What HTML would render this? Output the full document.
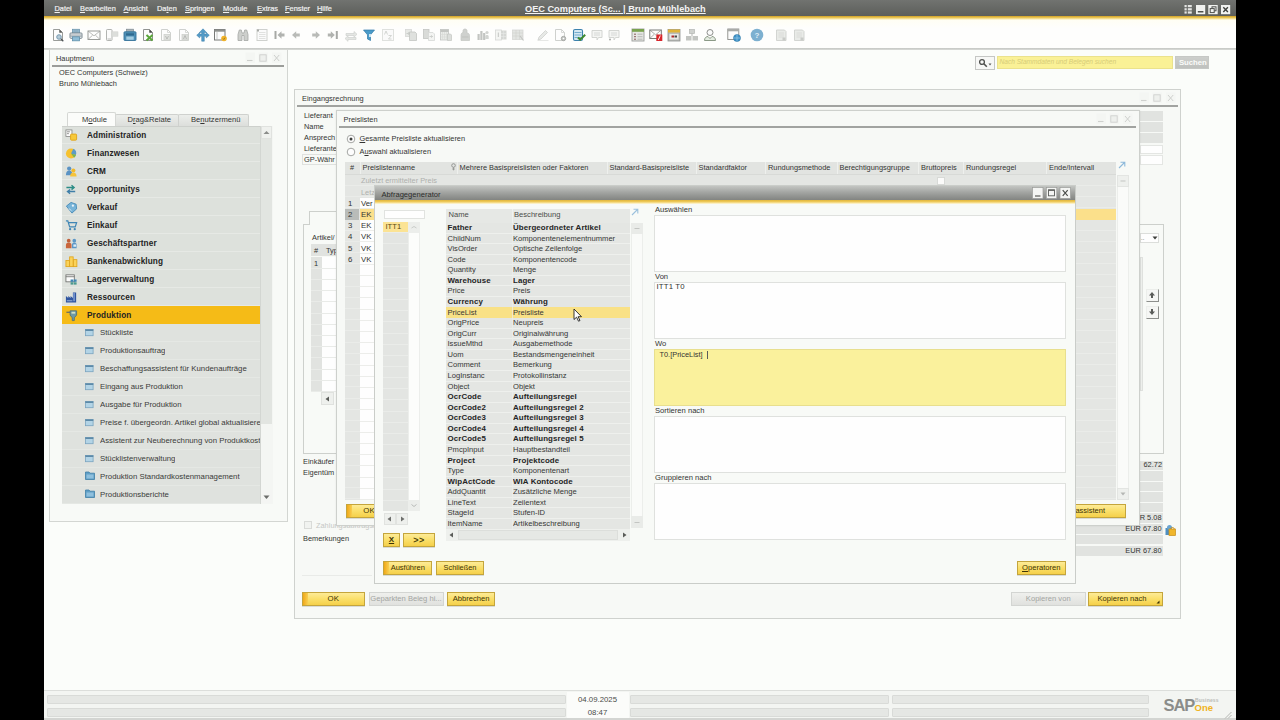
<!DOCTYPE html><html><head><meta charset="utf-8"><title>SAP Business One</title><style>html,body{margin:0;padding:0;background:#000;}
body{width:1280px;height:720px;position:relative;overflow:hidden;font-family:"Liberation Sans",sans-serif;font-size:7.4px;color:#333432;}
div,span{position:absolute;box-sizing:border-box;}
.t{white-space:nowrap;line-height:12px;height:12px;}
.b{font-weight:bold;color:#232323;font-size:8.2px;letter-spacing:0.12px;margin-top:1px;}
.mi{font-size:7.8px;color:#3a3b39;}
.w{color:#f1f1f1;}
.g{color:#a9aba8;}
.btn{border:1px solid #c4a53c;background:linear-gradient(#fdeb97,#fadf6a 50%,#f5d04a);text-align:center;line-height:12px;color:#3c3306;white-space:nowrap;overflow:hidden;box-shadow:0 1px 0 #d9dbd6;}
.btnd{border:1px solid #d3d5d2;background:linear-gradient(#eff0ed,#e0e1de);text-align:center;line-height:12px;color:#a3a5a2;white-space:nowrap;overflow:hidden;}
.win{background:#f7f9f6;border:1px solid #cdd0cc;}
.fld{background:#e2e4e1;}
.wh{background:#fefefd;border:1px solid #dcdfdb;}
.q{font-size:7.600px;color:#363735;}
.qb{font-size:7.900px;font-weight:bold;color:#252525;letter-spacing:0.100px;}
</style></head><body>
<div style="left:44px;top:0px;width:1192px;height:720px;background:#fbfdfa;"></div>
<div style="left:44px;top:0px;width:1192px;height:17px;background:linear-gradient(#717370,#5b5d59);"></div>
<div style="left:44px;top:16px;width:1192px;height:4px;background:linear-gradient(#cf9f25,#e6c04c 35%,#f6e39c 70%,#fffdf0);"></div>
<div style="left:44px;top:20px;width:1192px;height:28px;background:linear-gradient(#fffef4,#fefefd 30%);"></div>
<div style="left:44px;top:48px;width:1192px;height:2px;background:linear-gradient(#c4c6c3,#d9dbd8);"></div>
<span class="t w" style="left:54.5px;top:2.5px;font-size:7.400px;-webkit-text-stroke:0.200px #f1f1f1;"><u>D</u>atei</span>
<span class="t w" style="left:80px;top:2.5px;font-size:7.400px;-webkit-text-stroke:0.200px #f1f1f1;"><u>B</u>earbeiten</span>
<span class="t w" style="left:123.5px;top:2.5px;font-size:7.400px;-webkit-text-stroke:0.200px #f1f1f1;"><u>A</u>nsicht</span>
<span class="t w" style="left:157px;top:2.5px;font-size:7.400px;-webkit-text-stroke:0.200px #f1f1f1;">Da<u>t</u>en</span>
<span class="t w" style="left:185px;top:2.5px;font-size:7.400px;-webkit-text-stroke:0.200px #f1f1f1;"><u>S</u>pringen</span>
<span class="t w" style="left:223px;top:2.5px;font-size:7.400px;-webkit-text-stroke:0.200px #f1f1f1;"><u>M</u>odule</span>
<span class="t w" style="left:257px;top:2.5px;font-size:7.400px;-webkit-text-stroke:0.200px #f1f1f1;"><u>E</u>xtras</span>
<span class="t w" style="left:285px;top:2.5px;font-size:7.400px;-webkit-text-stroke:0.200px #f1f1f1;"><u>F</u>enster</span>
<span class="t w" style="left:317px;top:2.5px;font-size:7.400px;-webkit-text-stroke:0.200px #f1f1f1;"><u>H</u>ilfe</span>
<span class="t" style="left:525px;top:2.5px;font-size:9.2px;font-weight:bold;color:#f3f3f3;"><u>OEC Computers (Sc... | Bruno Mühlebach</u></span>
<svg style="position:absolute;left:1184px;top:4px;" width="47" height="11" viewBox="0 0 47 11"><g fill="#e4e5e3"><rect x="0.500" y="1" width="2.200" height="2.200"/><rect x="0.500" y="4.200" width="2.200" height="2.200"/><rect x="0.500" y="7.400" width="2.200" height="2.200"/><rect x="3.800" y="1" width="4" height="2.200"/><rect x="3.800" y="4.200" width="4" height="2.200"/><rect x="3.800" y="7.400" width="4" height="2.200"/></g>
<rect x="12" y="1" width="9.200" height="9.200" fill="#f1f2f0"/><rect x="13.800" y="7" width="5.600" height="1.500" fill="#4d4f4c"/>
<rect x="24.300" y="1" width="9.400" height="9.200" fill="#f1f2f0"/><rect x="28" y="2.800" width="4" height="4" fill="none" stroke="#4d4f4c" stroke-width="1"/><rect x="26.200" y="4.600" width="4" height="4" fill="#f1f2f0" stroke="#4d4f4c" stroke-width="1"/>
<rect x="37" y="1" width="9.200" height="9.200" fill="#f1f2f0"/><path d="M39.300 3.200l4.600 4.800M43.900 3.200l-4.600 4.800" stroke="#3f413e" stroke-width="1.400"/></svg>
<svg style="position:absolute;left:51.0px;top:28.0px;" width="14" height="14" viewBox="0 0 14 14"><path d="M2.5 1.5h6l3 3v8h-9z" fill="#fdfdfd" stroke="#9b9d9a" stroke-width="1"/><path d="M8.5 1.5v3h3" fill="none" stroke="#9b9d9a" stroke-width="0.8"/><path d="M8.500 1.500l3 3h-3z" fill="#5f615e"/><circle cx="8" cy="9" r="2.300" fill="#b4cbd8" stroke="#6f93ab" stroke-width="0.900"/><path d="M9.800 10.800l2.500 2.400" stroke="#4f5457" stroke-width="1.300"/></svg>
<svg style="position:absolute;left:69.0px;top:28.0px;" width="14" height="14" viewBox="0 0 14 14"><rect x="3.500" y="1.300" width="7" height="4" fill="#a5c4d5" stroke="#6b94ad" stroke-width="0.800"/><path d="M4.300 2.800h5.400M4.300 4h5.400" stroke="#6b94ad" stroke-width="0.600"/><rect x="1" y="5" width="12" height="5.300" rx="0.800" fill="#f1f3f4" stroke="#6c7c85" stroke-width="0.900"/><path d="M1.500 7h11M1.500 8.300h11" stroke="#7d8b93" stroke-width="0.700"/><rect x="3.500" y="8.800" width="7" height="4" fill="#8fbdd6" stroke="#5f8fab" stroke-width="0.800"/></svg>
<svg style="position:absolute;left:87.0px;top:28.0px;" width="14" height="14" viewBox="0 0 14 14"><rect x="1" y="3" width="12" height="8.500" fill="#fdfdfd" stroke="#8f918e" stroke-width="0.900"/><path d="M1 3l6 4.800 6-4.800M1 11.500l4.600-4.300M13 11.500l-4.600-4.300" fill="none" stroke="#9fa19e" stroke-width="0.700"/></svg>
<svg style="position:absolute;left:105.0px;top:28.0px;" width="14" height="14" viewBox="0 0 14 14"><rect x="1.500" y="1.500" width="5.500" height="11" rx="0.800" fill="#fbfbfb" stroke="#a9aba8" stroke-width="0.900"/><rect x="7" y="3.800" width="6" height="4.500" fill="#dcdedb" stroke="#d0d2cf" stroke-width="0.500"/><path d="M2.500 11h3.500" stroke="#a9aba8" stroke-width="0.800"/></svg>
<svg style="position:absolute;left:123.0px;top:28.0px;" width="14" height="14" viewBox="0 0 14 14"><rect x="3.500" y="1.200" width="7" height="3" fill="#aab3b8" stroke="#7f8a90" stroke-width="0.700"/><rect x="1" y="3.800" width="12" height="8.700" rx="0.800" fill="#4d8fb5" stroke="#35749b" stroke-width="0.900"/><rect x="3" y="5.300" width="8" height="2.200" fill="#2f6a8f"/><rect x="3.300" y="8.500" width="7.400" height="3.300" fill="#a3cde2"/></svg>
<svg style="position:absolute;left:141.0px;top:28.0px;" width="14" height="14" viewBox="0 0 14 14"><path d="M2.5 1.5h6l3 3v8h-9z" fill="#fdfdfd" stroke="#919390" stroke-width="1"/><path d="M8.5 1.5v3h3" fill="none" stroke="#919390" stroke-width="0.8"/><path d="M8.5 1.5h0l3 3h-3z" fill="#4a4c49"/><path d="M5.5 7l6 5.5M11.5 7l-6 5.5" stroke="#5aa63a" stroke-width="2"/></svg>
<svg style="position:absolute;left:159.0px;top:28.0px;" width="14" height="14" viewBox="0 0 14 14"><path d="M2.5 1.5h6l3 3v8h-9z" fill="#fdfdfd" stroke="#cfd1ce" stroke-width="1"/><path d="M8.5 1.5v3h3" fill="none" stroke="#cfd1ce" stroke-width="0.8"/><rect x="5" y="6.5" width="6" height="5.5" fill="#e1e3e0" stroke="#cfd1ce" stroke-width="0.8"/><path d="M6.5 8l1.5 3 1.5-3" stroke="#a9aba8" stroke-width="0.7" fill="none"/></svg>
<svg style="position:absolute;left:177.0px;top:28.0px;" width="14" height="14" viewBox="0 0 14 14"><path d="M2.5 1.5h6l3 3v8h-9z" fill="#fdfdfd" stroke="#cfd1ce" stroke-width="1"/><path d="M8.5 1.5v3h3" fill="none" stroke="#cfd1ce" stroke-width="0.8"/><rect x="5" y="6.5" width="6" height="5.5" fill="#dcdedb" stroke="#cfd1ce" stroke-width="0.8"/><path d="M6.5 11l1.5-3.5 1.5 3.5" stroke="#a9aba8" stroke-width="0.7" fill="none"/></svg>
<svg style="position:absolute;left:195.5px;top:28.0px;" width="14" height="14" viewBox="0 0 14 14"><path d="M7 0.800l3.600 3.700h-2.300v1.600h2v-1.600l3 2.700-3 2.700v-1.600h-2v4.900h-2.600v-4.900h-2v1.600l-3-2.700 3-2.700v1.600h2v-1.600h-2.300z" fill="#549bc7" stroke="#3a7eab" stroke-width="0.500"/></svg>
<svg style="position:absolute;left:213.0px;top:28.0px;" width="14" height="14" viewBox="0 0 14 14"><rect x="1.5" y="1.5" width="10.5" height="10.5" fill="#fcfcfc" stroke="#777976" stroke-width="1"/><rect x="1.5" y="1.5" width="10.5" height="2.2" fill="#8e908d"/><path d="M4 3.7v8.3" stroke="#b9bbb8" stroke-width="0.8"/><circle cx="11" cy="10.5" r="2.8" fill="#f1b32a"/><path d="M10 10.5l0.8 1 1.3-2" stroke="#8d6a14" stroke-width="0.7" fill="none"/></svg>
<svg style="position:absolute;left:236.0px;top:28.0px;" width="14" height="14" viewBox="0 0 14 14"><path d="M2 12.5v-6l1.3-4.5h2l0.7 3h2l0.7-3h2l1.3 4.5v6h-4v-5h-2v5z" fill="#cdcfcc" stroke="#a5a7a4" stroke-width="0.8"/></svg>
<svg style="position:absolute;left:254.5px;top:28.0px;" width="14" height="14" viewBox="0 0 14 14"><rect x="2" y="1.5" width="10" height="11" fill="#fbfbfb" stroke="#cfd1ce" stroke-width="1"/><path d="M4 4.5h6.5M4 6.5h6.5M4 8.5h6.5M4 10.5h6.5" stroke="#dadcd9" stroke-width="0.8"/><rect x="2" y="1.5" width="2" height="2" fill="#a9aba8"/></svg>
<svg style="position:absolute;left:272.0px;top:28.0px;" width="14" height="14" viewBox="0 0 14 14"><rect x="2.5" y="3" width="2" height="8" fill="#a7a9a6"/><path d="M5.5 7l4-3.8v2.3h3v3h-3v2.3z" fill="#b1b3b0"/></svg>
<svg style="position:absolute;left:289.0px;top:28.0px;" width="14" height="14" viewBox="0 0 14 14"><path d="M3 7l4.2-3.8v2.3h3.6v3h-3.6v2.3z" fill="#b9bbb8"/></svg>
<svg style="position:absolute;left:308.5px;top:28.0px;" width="14" height="14" viewBox="0 0 14 14"><path d="M11 7l-4.2-3.8v2.3h-3.6v3h3.6v2.3z" fill="#b9bbb8"/></svg>
<svg style="position:absolute;left:325.5px;top:28.0px;" width="14" height="14" viewBox="0 0 14 14"><rect x="9.8" y="3" width="2" height="8" fill="#a7a9a6"/><path d="M8.8 7l-4-3.8v2.3h-3v3h3v2.3z" fill="#b1b3b0"/></svg>
<svg style="position:absolute;left:344.0px;top:28.0px;" width="14" height="14" viewBox="0 0 14 14"><path d="M2 5.5h8v-2l3 2.8-3 2.8v-1.6h-8zM12 9.5h-8v-1.6l-3 2.6 3 2.8v-1.8h8z" fill="#e4e6e3" stroke="#cfd1ce" stroke-width="0.7"/></svg>
<svg style="position:absolute;left:362.0px;top:28.0px;" width="14" height="14" viewBox="0 0 14 14"><path d="M1.5 2h11l-4 4.8v5.7l-3-1.5v-4.2z" fill="#4a9bc9" stroke="#3179a6" stroke-width="0.7"/><rect x="7" y="6" width="2" height="3" fill="#cfe6f3"/></svg>
<svg style="position:absolute;left:380.5px;top:28.0px;" width="14" height="14" viewBox="0 0 14 14"><rect x="1.5" y="1.5" width="11" height="11" fill="#fafafa" stroke="#dfe1de" stroke-width="1"/><path d="M3.5 6.5l1.5-3.5 1.5 3.5M7.5 7.5h3l-3 3.5h3" fill="none" stroke="#cfd1ce" stroke-width="0.9"/></svg>
<svg style="position:absolute;left:403.5px;top:28.0px;" width="14" height="14" viewBox="0 0 14 14"><rect x="1.500" y="1.500" width="6" height="7" fill="#e7e9e6" stroke="#d6d8d5" stroke-width="0.800"/><path d="M5.500 4h5.500l1.500 1.500v7h-7z" fill="#dfe1de" stroke="#c3c5c2" stroke-width="0.800"/><path d="M2.500 5.500h3l-1.200-1.200M5.500 5.500l-1.200 1.200" stroke="#c3c5c2" stroke-width="0.800" fill="none"/></svg>
<svg style="position:absolute;left:421.8px;top:28.0px;" width="14" height="14" viewBox="0 0 14 14"><rect x="1.500" y="1.500" width="5.500" height="9" fill="#d9dbd8" stroke="#c3c5c2" stroke-width="0.800"/><path d="M6.500 4.500h4.500l1.500 1.500v6.500h-6z" fill="#f3f4f2" stroke="#d6d8d5" stroke-width="0.800"/><path d="M7.500 8.500h3l-1.200-1.200M10.500 8.500l-1.200 1.200" stroke="#c3c5c2" stroke-width="0.800" fill="none"/></svg>
<svg style="position:absolute;left:439.0px;top:28.0px;" width="14" height="14" viewBox="0 0 14 14"><rect x="1.500" y="1.500" width="8" height="10.500" fill="#e9ebe8" stroke="#c3c5c2" stroke-width="0.800"/><rect x="1.500" y="1.500" width="8" height="2.500" fill="#c3c5c2"/><path d="M3.500 4v8M5.500 4v8M7.500 4v8M1.500 6.500h8M1.500 9h8" stroke="#d6d8d5" stroke-width="0.600"/><path d="M8.500 6h3l1 1v5.500h-4z" fill="#dcdedb" stroke="#c3c5c2" stroke-width="0.700"/></svg>
<svg style="position:absolute;left:458.0px;top:28.0px;" width="14" height="14" viewBox="0 0 14 14"><path d="M3 12.500v-5c0-2 1-3 2-3v-2c0-1 1-1.500 2-1.500s2 0.500 2 1.500v2.500c1.500 0 2.500 1 2.500 2.500v5z" fill="#cfd1ce" stroke="#c3c5c2" stroke-width="0.700"/><path d="M4 9h6.500" stroke="#b9bbb8" stroke-width="0.700"/></svg>
<svg style="position:absolute;left:475.5px;top:28.0px;" width="14" height="14" viewBox="0 0 14 14"><rect x="1.500" y="6" width="2.200" height="6" fill="#c3c5c2"/><rect x="4.300" y="3" width="2.200" height="9" fill="#c3c5c2"/><rect x="7.100" y="5" width="2.200" height="7" fill="#c3c5c2"/><circle cx="11" cy="4.500" r="1.600" fill="#d2d4d1"/><path d="M9.300 11v-2.500c0-1 0.700-1.500 1.700-1.500s1.700 0.500 1.700 1.500v2.500z" fill="#d2d4d1"/></svg>
<svg style="position:absolute;left:493.5px;top:28.0px;" width="14" height="14" viewBox="0 0 14 14"><rect x="1.500" y="2" width="6" height="10" fill="#f4f5f3" stroke="#d6d8d5" stroke-width="0.800"/><path d="M4.300 4.500v4.500" stroke="#c3c5c2" stroke-width="1"/><rect x="7" y="2.500" width="5.500" height="9" fill="#d5d7d4"/><path d="M7 5.500h5.500M7 8.500h5.500M9.700 2.500v9" stroke="#e9ebe8" stroke-width="0.600"/></svg>
<svg style="position:absolute;left:511.0px;top:28.0px;" width="14" height="14" viewBox="0 0 14 14"><rect x="1.500" y="2" width="10.500" height="9.500" fill="#e3e5e2" stroke="#d6d8d5" stroke-width="0.800"/><path d="M1.500 5h10.500M1.500 8h10.500M5 2v9.500M8.500 2v9.500" stroke="#d0d2cf" stroke-width="0.600"/><path d="M9 8l3.500 4.500" stroke="#c3c5c2" stroke-width="1.200"/></svg>
<svg style="position:absolute;left:535.5px;top:28.0px;" width="14" height="14" viewBox="0 0 14 14"><path d="M2 12l1-3 6.5-6.5 2 2-6.5 6.5z" fill="#e7e9e6" stroke="#cfd1ce" stroke-width="0.8"/><path d="M1.5 12.5h11" stroke="#dfe1de" stroke-width="0.8"/></svg>
<svg style="position:absolute;left:553.0px;top:28.0px;" width="14" height="14" viewBox="0 0 14 14"><path d="M2.5 1.5h6l3 3v8h-9z" fill="#fdfdfd" stroke="#cfd1ce" stroke-width="1"/><path d="M8.5 1.5v3h3" fill="none" stroke="#cfd1ce" stroke-width="0.8"/><circle cx="10.5" cy="10.5" r="2.2" fill="#c4c6c3" stroke="#a3a5a2" stroke-width="0.9"/><circle cx="10.5" cy="10.5" r="0.8" fill="#fff"/></svg>
<svg style="position:absolute;left:571.8px;top:28.0px;" width="14" height="14" viewBox="0 0 14 14"><rect x="1.5" y="1.5" width="9" height="11" rx="1.5" fill="#d4e7f2" stroke="#3d82ad" stroke-width="1.1"/><path d="M2.5 4.5h7M2.5 7h7M2.5 9.5h7" stroke="#6aa5c9" stroke-width="0.9"/><path d="M6 9.5l2.2 2.2 5-5" stroke="#3f8a2e" stroke-width="2" fill="none"/></svg>
<svg style="position:absolute;left:590.0px;top:28.0px;" width="14" height="14" viewBox="0 0 14 14"><path d="M2 2.5h10v7h-3.5l-1.5 2.5v-2.5h-5z" fill="#f4f5f3" stroke="#cfd1ce" stroke-width="0.9"/><path d="M4 5h6M4 7h6" stroke="#cfd1ce" stroke-width="0.8"/></svg>
<svg style="position:absolute;left:606.8px;top:28.0px;" width="14" height="14" viewBox="0 0 14 14"><path d="M2 2.5h10v7h-3.5l-1.5 2.5v-2.5h-5z" fill="#f4f5f3" stroke="#cfd1ce" stroke-width="0.9"/><path d="M4 5h6M4 7h6" stroke="#cfd1ce" stroke-width="0.8"/><circle cx="3" cy="11.5" r="1" fill="#a9aba8"/></svg>
<svg style="position:absolute;left:631.4px;top:28.0px;" width="14" height="14" viewBox="0 0 14 14"><rect x="1" y="1" width="12" height="12" fill="#e6e7e4" stroke="#9c9e9b" stroke-width="0.9"/><rect x="1" y="1" width="12" height="2.8" fill="#7aa24f"/><path d="M3 6.2h2M3 8.7h2M3 11.2h2" stroke="#8a5a5a" stroke-width="1"/><path d="M6.5 6.2h5M6.5 8.7h5M6.5 11.2h5" stroke="#b1b3b0" stroke-width="0.9"/></svg>
<svg style="position:absolute;left:649.0px;top:28.0px;" width="14" height="14" viewBox="0 0 14 14"><rect x="0.8" y="2" width="11.5" height="8.5" fill="#fdfdfd" stroke="#6c6e6b" stroke-width="0.9"/><path d="M0.8 2l5.8 4.8 5.7-4.8M0.8 10.5l4.2-4M12.3 10.5l-4.2-4" fill="none" stroke="#8b8d8a" stroke-width="0.7"/><rect x="7.3" y="6.5" width="6" height="6.5" fill="#d9262c"/><path d="M9.3 12l2-4.5" stroke="#fff" stroke-width="0.9"/></svg>
<svg style="position:absolute;left:667.0px;top:28.0px;" width="14" height="14" viewBox="0 0 14 14"><rect x="1" y="1.5" width="12" height="11.5" fill="#b9bbb8" stroke="#8f918e" stroke-width="0.8"/><rect x="1" y="1.5" width="12" height="3" fill="#e0b437"/><rect x="2.5" y="6" width="9" height="5.5" fill="#e9eae7"/><rect x="4.5" y="7.5" width="2.5" height="2" fill="#b0282c"/><rect x="7.5" y="7.5" width="2.5" height="2" fill="#4a4c49"/></svg>
<svg style="position:absolute;left:685.0px;top:28.0px;" width="14" height="14" viewBox="0 0 14 14"><rect x="4.5" y="1.5" width="5" height="4" fill="#cfd1ce" stroke="#b3b5b2" stroke-width="0.7"/><rect x="1" y="8" width="5.5" height="4.5" fill="#c3c5c2"/><rect x="7.5" y="8" width="5.5" height="4.5" fill="#c3c5c2"/><path d="M7 5.5v2.5" stroke="#b3b5b2"/></svg>
<svg style="position:absolute;left:703.0px;top:28.0px;" width="14" height="14" viewBox="0 0 14 14"><circle cx="7" cy="4.5" r="3" fill="#fbfbfb" stroke="#8d8f8c" stroke-width="1"/><path d="M1.5 12.5c0-3 2-4 3.5-4l2 2 2-2c1.500 0 3.500 1 3.500 4z" fill="#e4ece1" stroke="#7f8f7b" stroke-width="0.9"/></svg>
<svg style="position:absolute;left:727.0px;top:28.0px;" width="14" height="14" viewBox="0 0 14 14"><rect x="0.8" y="1" width="11" height="10.5" fill="#fcfcfc" stroke="#8a8c89" stroke-width="0.9"/><rect x="0.8" y="1" width="11" height="2.3" fill="#a9aba8"/><circle cx="10" cy="10" r="3.5" fill="#3e93c9" stroke="#2a74a4" stroke-width="0.6"/><path d="M6.500 10h7M10 6.500v7" stroke="#a8d1ea" stroke-width="0.6"/></svg>
<svg style="position:absolute;left:750.0px;top:28.0px;" width="14" height="14" viewBox="0 0 14 14"><circle cx="7" cy="7" r="6.300" fill="#7db0d0"/><text x="7" y="9.800" font-size="8" font-weight="bold" text-anchor="middle" fill="#dfedf6" font-family="Liberation Sans, sans-serif">?</text></svg>
<svg style="position:absolute;left:774.0px;top:28.0px;" width="14" height="14" viewBox="0 0 14 14"><path d="M2.5 2h8l1.5 1.5v9h-9.500z" fill="#e9ebe8" stroke="#cfd1ce" stroke-width="0.9"/><path d="M4.500 5h5.500M4.500 7h5.500M4.500 9h5.500" stroke="#d5d7d4" stroke-width="0.8"/><rect x="8.500" y="9.500" width="3" height="3" fill="#c9cbc8"/></svg>
<svg style="position:absolute;left:792.0px;top:28.0px;" width="14" height="14" viewBox="0 0 14 14"><path d="M2.5 2h8l1.5 1.5v9h-9.500z" fill="#e9ebe8" stroke="#cfd1ce" stroke-width="0.9"/><path d="M4.500 5h5.500M4.500 7h5.500M4.500 9h5.500" stroke="#d5d7d4" stroke-width="0.8"/><rect x="8.500" y="9.500" width="3" height="3" fill="#c9cbc8"/></svg>
<div style="left:49px;top:50px;width:239px;height:472px;background:#f8faf7;border:1px solid #d3d6d2;border-top:none;"></div>
<span class="t" style="left:56px;top:52.5px;">Hauptmenü</span>
<div style="left:52px;top:65px;width:232px;height:2px;background:#9b9d9a;"></div>
<svg style="position:absolute;left:244.5px;top:52px;" width="40" height="12" viewBox="0 0 40 12"><rect x="0.500" y="0.500" width="9.500" height="10.500" fill="#f4f6f3"/><rect x="13.500" y="0.500" width="9.500" height="10.500" fill="#f4f6f3"/><rect x="27" y="0.500" width="9.500" height="10.500" fill="#f4f6f3"/><path d="M2 8.500h5.500" stroke="#cdcfcc" stroke-width="1.100"/><rect x="14.800" y="2.800" width="6.400" height="6.400" fill="#eef0ed" stroke="#cdcfcc" stroke-width="0.900"/><path d="M29 3l5.200 6M34.200 3l-5.200 6" stroke="#cdcfcc" stroke-width="1"/></svg>
<span class="t" style="left:59px;top:66.5px;">OEC Computers (Schweiz)</span>
<span class="t" style="left:59px;top:77.5px;">Bruno Mühlebach</span>
<div style="left:115px;top:114px;width:64px;height:12px;background:linear-gradient(#eceeeb,#dcdedb);border:1px solid #cfd1ce;border-bottom:none;border-radius:2px 2px 0 0;"></div>
<div style="left:178px;top:114px;width:71px;height:12px;background:linear-gradient(#eceeeb,#dcdedb);border:1px solid #cfd1ce;border-bottom:none;border-radius:2px 2px 0 0;"></div>
<div style="left:67px;top:112px;width:49px;height:15px;background:#fbfcfa;border:1px solid #d5d7d4;border-bottom:none;border-radius:2px 2px 0 0;"></div>
<span class="t" style="left:82px;top:114px;font-size:7.600px;">M<u>o</u>dule</span>
<span class="t" style="left:127.5px;top:114px;font-size:7.600px;">D<u>r</u>ag&amp;Relate</span>
<span class="t" style="left:191px;top:114px;font-size:7.600px;">Be<u>n</u>utzermenü</span>
<div style="left:62px;top:125.5px;width:211px;height:378.5px;background:#dde1dc;border-top:1px solid #cdd0cc;"></div>
<div style="left:62px;top:143px;width:198px;height:1px;background:#e6e9e5;"></div>
<span class="t b" style="left:87px;top:129px;">Administration</span>
<div style="left:62px;top:161px;width:198px;height:1px;background:#e6e9e5;"></div>
<span class="t b" style="left:87px;top:147px;">Finanzwesen</span>
<div style="left:62px;top:179px;width:198px;height:1px;background:#e6e9e5;"></div>
<span class="t b" style="left:87px;top:165px;">CRM</span>
<div style="left:62px;top:197px;width:198px;height:1px;background:#e6e9e5;"></div>
<span class="t b" style="left:87px;top:183px;">Opportunitys</span>
<div style="left:62px;top:215px;width:198px;height:1px;background:#e6e9e5;"></div>
<span class="t b" style="left:87px;top:201px;">Verkauf</span>
<div style="left:62px;top:233px;width:198px;height:1px;background:#e6e9e5;"></div>
<span class="t b" style="left:87px;top:219px;">Einkauf</span>
<div style="left:62px;top:251px;width:198px;height:1px;background:#e6e9e5;"></div>
<span class="t b" style="left:87px;top:237px;">Geschäftspartner</span>
<div style="left:62px;top:269px;width:198px;height:1px;background:#e6e9e5;"></div>
<span class="t b" style="left:87px;top:255px;">Bankenabwicklung</span>
<div style="left:62px;top:287px;width:198px;height:1px;background:#e6e9e5;"></div>
<span class="t b" style="left:87px;top:273px;">Lagerverwaltung</span>
<div style="left:62px;top:305px;width:198px;height:1px;background:#e6e9e5;"></div>
<span class="t b" style="left:87px;top:291px;">Ressourcen</span>
<div style="left:62px;top:306px;width:198px;height:18px;background:#f5bb17;"></div>
<span class="t b" style="left:87px;top:309px;">Produktion</span>
<div style="left:62px;top:324px;width:198px;height:180px;background:#dfe2de;"></div>
<div style="left:62px;top:341px;width:198px;height:1px;background:#e5e8e4;"></div>
<span class="t mi" style="left:100px;top:327px;max-width:160px;overflow:hidden;">Stückliste</span>
<svg style="position:absolute;left:85px;top:329px;" width="9" height="8" viewBox="0 0 9 8"><rect x="0.500" y="0.500" width="7.600" height="6.200" fill="#b3d4e6" stroke="#7aa4bf" stroke-width="0.800"/><rect x="0.300" y="0.300" width="8" height="1.700" fill="#5d8aa8"/></svg>
<div style="left:62px;top:359px;width:198px;height:1px;background:#e5e8e4;"></div>
<span class="t mi" style="left:100px;top:345px;max-width:160px;overflow:hidden;">Produktionsauftrag</span>
<svg style="position:absolute;left:85px;top:347px;" width="9" height="8" viewBox="0 0 9 8"><rect x="0.500" y="0.500" width="7.600" height="6.200" fill="#b3d4e6" stroke="#7aa4bf" stroke-width="0.800"/><rect x="0.300" y="0.300" width="8" height="1.700" fill="#5d8aa8"/></svg>
<div style="left:62px;top:377px;width:198px;height:1px;background:#e5e8e4;"></div>
<span class="t mi" style="left:100px;top:363px;max-width:160px;overflow:hidden;">Beschaffungsassistent für Kundenaufträge</span>
<svg style="position:absolute;left:85px;top:365px;" width="9" height="8" viewBox="0 0 9 8"><rect x="0.500" y="0.500" width="7.600" height="6.200" fill="#b3d4e6" stroke="#7aa4bf" stroke-width="0.800"/><rect x="0.300" y="0.300" width="8" height="1.700" fill="#5d8aa8"/></svg>
<div style="left:62px;top:395px;width:198px;height:1px;background:#e5e8e4;"></div>
<span class="t mi" style="left:100px;top:381px;max-width:160px;overflow:hidden;">Eingang aus Produktion</span>
<svg style="position:absolute;left:85px;top:383px;" width="9" height="8" viewBox="0 0 9 8"><rect x="0.500" y="0.500" width="7.600" height="6.200" fill="#b3d4e6" stroke="#7aa4bf" stroke-width="0.800"/><rect x="0.300" y="0.300" width="8" height="1.700" fill="#5d8aa8"/></svg>
<div style="left:62px;top:413px;width:198px;height:1px;background:#e5e8e4;"></div>
<span class="t mi" style="left:100px;top:399px;max-width:160px;overflow:hidden;">Ausgabe für Produktion</span>
<svg style="position:absolute;left:85px;top:401px;" width="9" height="8" viewBox="0 0 9 8"><rect x="0.500" y="0.500" width="7.600" height="6.200" fill="#b3d4e6" stroke="#7aa4bf" stroke-width="0.800"/><rect x="0.300" y="0.300" width="8" height="1.700" fill="#5d8aa8"/></svg>
<div style="left:62px;top:431px;width:198px;height:1px;background:#e5e8e4;"></div>
<span class="t mi" style="left:100px;top:417px;max-width:160px;overflow:hidden;">Preise f. übergeordn. Artikel global aktualisieren</span>
<svg style="position:absolute;left:85px;top:419px;" width="9" height="8" viewBox="0 0 9 8"><rect x="0.500" y="0.500" width="7.600" height="6.200" fill="#b3d4e6" stroke="#7aa4bf" stroke-width="0.800"/><rect x="0.300" y="0.300" width="8" height="1.700" fill="#5d8aa8"/></svg>
<div style="left:62px;top:449px;width:198px;height:1px;background:#e5e8e4;"></div>
<span class="t mi" style="left:100px;top:435px;max-width:160px;overflow:hidden;">Assistent zur Neuberechnung von Produktkosten</span>
<svg style="position:absolute;left:85px;top:437px;" width="9" height="8" viewBox="0 0 9 8"><rect x="0.500" y="0.500" width="7.600" height="6.200" fill="#b3d4e6" stroke="#7aa4bf" stroke-width="0.800"/><rect x="0.300" y="0.300" width="8" height="1.700" fill="#5d8aa8"/></svg>
<div style="left:62px;top:467px;width:198px;height:1px;background:#e5e8e4;"></div>
<span class="t mi" style="left:100px;top:453px;max-width:160px;overflow:hidden;">Stücklistenverwaltung</span>
<svg style="position:absolute;left:85px;top:455px;" width="9" height="8" viewBox="0 0 9 8"><rect x="0.500" y="0.500" width="7.600" height="6.200" fill="#b3d4e6" stroke="#7aa4bf" stroke-width="0.800"/><rect x="0.300" y="0.300" width="8" height="1.700" fill="#5d8aa8"/></svg>
<div style="left:62px;top:485px;width:198px;height:1px;background:#e5e8e4;"></div>
<span class="t mi" style="left:100px;top:471px;max-width:160px;overflow:hidden;">Produktion Standardkostenmanagement</span>
<svg style="position:absolute;left:85px;top:471px;" width="10" height="9" viewBox="0 0 10 9"><path d="M0.500 1h3.500l1 1.200h4.500v6.300h-9z" fill="#5f9fc6" stroke="#3f7fa6" stroke-width="0.800"/><rect x="1.500" y="3.500" width="7" height="4" fill="#8fc0dd"/></svg>
<div style="left:62px;top:503px;width:198px;height:1px;background:#e5e8e4;"></div>
<span class="t mi" style="left:100px;top:489px;max-width:160px;overflow:hidden;">Produktionsberichte</span>
<svg style="position:absolute;left:85px;top:489px;" width="10" height="9" viewBox="0 0 10 9"><path d="M0.500 1h3.500l1 1.200h4.500v6.300h-9z" fill="#5f9fc6" stroke="#3f7fa6" stroke-width="0.800"/><rect x="1.500" y="3.500" width="7" height="4" fill="#8fc0dd"/></svg>
<div style="left:260px;top:126px;width:13px;height:378px;background:#f4f6f3;border-left:1px solid #d3d6d2;"></div>
<div style="left:261px;top:126px;width:11px;height:13px;background:#eff1ee;border:1px solid #e0e2df;"></div>
<svg style="position:absolute;left:263px;top:130px;" width="7" height="5" viewBox="0 0 7 5"><path d="M0.500 4l3-3 3 3z" fill="#8b8d8a"/></svg>
<div style="left:261px;top:139px;width:11px;height:285px;background:#e2e5e1;"></div>
<div style="left:261px;top:490px;width:11px;height:13px;background:#f4f5f3;"></div>
<svg style="position:absolute;left:263px;top:495px;" width="7" height="5" viewBox="0 0 7 5"><path d="M0.500 0.500l3 3.500 3-3.500z" fill="#6b6d6a"/></svg>
<svg style="position:absolute;left:64.5px;top:128.5px;" width="13" height="13" viewBox="0 0 14 14"><rect x="1" y="1" width="6.500" height="7" fill="#fbfbfb" stroke="#7d7f7c" stroke-width="0.800"/><path d="M2.200 3h3M2.200 5h2" stroke="#6d6f6c" stroke-width="0.800"/><rect x="6" y="5.500" width="6.500" height="6.500" rx="1" fill="#f7c93a" stroke="#e0a51c" stroke-width="1"/></svg>
<svg style="position:absolute;left:64.5px;top:146.5px;" width="13" height="13" viewBox="0 0 14 14"><circle cx="6.500" cy="7" r="5.500" fill="#f6c12d"/><path d="M6.500 7l2.500-5a5.500 5.500 0 0 1 2.800 6.500z" fill="#5b9bc8"/><path d="M6.500 7l5.300 1.500a5.500 5.500 0 0 1-2 3z" fill="#7ab656"/></svg>
<svg style="position:absolute;left:64.5px;top:164.5px;" width="13" height="13" viewBox="0 0 14 14"><circle cx="4.500" cy="3.800" r="2.300" fill="#5b93c4"/><path d="M1 11c0-3.500 1.500-5 3.500-5s3.500 1.500 3.500 5z" fill="#5b93c4"/><circle cx="9" cy="6" r="2.200" fill="#f2b92a"/><path d="M5.500 12.500c0-3 1.500-4.500 3.500-4.500s3.500 1.500 3.500 4.500z" fill="#f6c43a"/></svg>
<svg style="position:absolute;left:64.5px;top:182.5px;" width="13" height="13" viewBox="0 0 14 14"><path d="M1.500 4.800h7.500M7 2.500l2.800 2.300-2.800 2.300" fill="none" stroke="#2d8d86" stroke-width="1.500"/><path d="M11 9.200h-7.500M5.500 7l-2.800 2.200 2.800 2.300" fill="none" stroke="#3f7fa8" stroke-width="1.500"/></svg>
<svg style="position:absolute;left:64.5px;top:200.5px;" width="13" height="13" viewBox="0 0 14 14"><path d="M1.500 5.500l5-4 5.500 2 0.500 5-5 4.500z" fill="#78b4d8" stroke="#3f86b5" stroke-width="0.900"/><circle cx="8.500" cy="5" r="1.200" fill="#eaf4fa"/><path d="M4 8l3 2.500" stroke="#e3f0f8" stroke-width="0.900"/></svg>
<svg style="position:absolute;left:64.5px;top:218.5px;" width="13" height="13" viewBox="0 0 14 14"><path d="M1 2h2l2 6.500h6l1.500-4.500h-8.500" fill="none" stroke="#3f86b5" stroke-width="1.300"/><circle cx="5.500" cy="11" r="1.200" fill="#3f86b5"/><circle cx="10.500" cy="11" r="1.200" fill="#3f86b5"/></svg>
<svg style="position:absolute;left:64.5px;top:236.5px;" width="13" height="13" viewBox="0 0 14 14"><circle cx="4" cy="4" r="2" fill="#c0603a"/><path d="M1 12v-3.500c0-1.500 1.300-2.500 3-2.500s3 1 3 2.500v3.500z" fill="#c9663c"/><circle cx="10" cy="4" r="2" fill="#5c97c7"/><path d="M7.500 12v-3.500c0-1.500 1-2.500 2.500-2.500s2.500 1 2.500 2.500v3.500z" fill="#5c97c7"/><rect x="9" y="8" width="3" height="2.500" fill="#dcecf6"/></svg>
<svg style="position:absolute;left:64.5px;top:254.5px;" width="13" height="13" viewBox="0 0 14 14"><rect x="1" y="6" width="3.800" height="6.500" fill="#fbd35a" stroke="#e0a51c" stroke-width="0.900"/><rect x="5" y="2" width="3.800" height="10.500" fill="#fbd35a" stroke="#e0a51c" stroke-width="0.900"/><rect x="9" y="5" width="3.800" height="7.500" fill="#fbd35a" stroke="#e0a51c" stroke-width="0.900"/></svg>
<svg style="position:absolute;left:64.5px;top:272.5px;" width="13" height="13" viewBox="0 0 14 14"><rect x="1" y="2" width="9" height="7.500" fill="#fbfbfb" stroke="#6d6f6c" stroke-width="0.900"/><path d="M1 4h9" stroke="#6d6f6c" stroke-width="0.900"/><rect x="6" y="7" width="3" height="2.500" fill="#3f86b5"/><rect x="9.500" y="7" width="3" height="2.500" fill="#3f86b5"/><rect x="6" y="10" width="3" height="2.500" fill="#4a9a8f"/><rect x="9.500" y="10" width="3" height="2.500" fill="#4a9a8f"/></svg>
<svg style="position:absolute;left:64.5px;top:290.5px;" width="13" height="13" viewBox="0 0 14 14"><path d="M1 12.500v-7l2.500 2v-2l2.500 2v-2l2.500 2v-6h3.500v11z" fill="#2f55a0"/><rect x="9" y="2" width="1.500" height="9" fill="#86a4d8"/><path d="M2 10.500h6" stroke="#9db5e0" stroke-width="1"/></svg>
<svg style="position:absolute;left:64.5px;top:308.5px;" width="13" height="13" viewBox="0 0 14 14"><path d="M1.500 3.500h4" stroke="#57626a" stroke-width="1.200"/><path d="M5.500 2h7v4.500l-2.500 3v3h-2.200v-3l-2.300-3z" fill="#6f9aa6" stroke="#4a6f7c" stroke-width="0.900"/><rect x="7" y="3" width="4" height="2" fill="#cfe0c8"/></svg>
<div style="left:975px;top:56px;width:20px;height:14px;background:#f7f8f6;border:1px solid #c5c7c4;"></div>
<svg style="position:absolute;left:978px;top:58px;" width="14" height="10" viewBox="0 0 14 10"><circle cx="4" cy="4" r="2.400" fill="none" stroke="#4e504d" stroke-width="1.300"/><path d="M5.800 5.800l3 3" stroke="#4e504d" stroke-width="1.600"/><path d="M10.500 5.500h3l-1.500 2z" fill="#5a5c59"/></svg>
<div style="left:997px;top:56px;width:176px;height:13px;background:#faf196;border:1px solid #ebe28c;"></div>
<span class="t" style="left:999.5px;top:55.5px;font-size:6.600px;color:#d6cc78;"><i>Nach Stammdaten und Belegen suchen</i></span>
<div style="left:1175px;top:56px;width:34px;height:13px;background:linear-gradient(#cdcfcc,#bfc1be);border:1px solid #c6c8c5;"></div>
<span class="t" style="left:1179px;top:56.5px;color:#fafbf9;font-size:7.800px;font-weight:bold;letter-spacing:-0.100px;">Suchen</span>
<div class="win" style="left:294px;top:89px;width:887px;height:530px;border-color:#cfd2ce;"></div>
<span class="t" style="left:302px;top:92.5px;">Eingangsrechnung</span>
<div style="left:297px;top:105px;width:881px;height:2px;background:#a1a3a0;"></div>
<svg style="position:absolute;left:1138.5px;top:92px;" width="40" height="12" viewBox="0 0 40 12"><rect x="0.500" y="0.500" width="9.500" height="10.500" fill="#f4f6f3"/><rect x="13.500" y="0.500" width="9.500" height="10.500" fill="#f4f6f3"/><rect x="27" y="0.500" width="9.500" height="10.500" fill="#f4f6f3"/><path d="M2 8.500h5.500" stroke="#cfd1ce" stroke-width="1.100"/><rect x="14.800" y="2.800" width="6.400" height="6.400" fill="#eef0ed" stroke="#cfd1ce" stroke-width="0.900"/><path d="M29 3l5.200 6M34.200 3l-5.200 6" stroke="#cfd1ce" stroke-width="1"/></svg>
<span class="t" style="left:304px;top:110px;">Lieferant</span>
<span class="t" style="left:304px;top:121px;">Name</span>
<span class="t" style="left:304px;top:132px;">Ansprech</span>
<span class="t" style="left:304px;top:143px;">Lieferante</span>
<span class="t" style="left:304px;top:153.5px;">GP-Währ</span>
<div style="left:302px;top:154px;width:40px;height:11px;background:none;border:1px solid #dfe1de;"></div>
<div style="left:1140px;top:110.5px;width:23px;height:10px;background:#e1e3e0;"></div>
<div style="left:1140px;top:121.5px;width:23px;height:10px;background:#e1e3e0;"></div>
<div style="left:1140px;top:132.5px;width:23px;height:10.5px;background:#e1e3e0;"></div>
<div style="left:1140px;top:144.5px;width:23px;height:9px;background:#fefefe;border:1px solid #e4e6e3;"></div>
<div style="left:1140px;top:155px;width:23px;height:9.5px;background:#fefefe;border:1px solid #e4e6e3;"></div>
<div style="left:309px;top:211px;width:60px;height:14px;background:#f8faf7;border:1px solid #cdd0cc;border-bottom:none;"></div>
<div style="left:303px;top:224px;width:861px;height:230px;background:#f8faf7;border:1px solid #cdd0cc;"></div>
<div style="left:310px;top:224px;width:58px;height:2px;background:#f8faf7;"></div>
<span class="t" style="left:312px;top:231.5px;">Artikel/</span>
<div style="left:311px;top:244px;width:60px;height:12px;background:#e1e3e0;"></div>
<span class="t" style="left:314px;top:244.5px;">#</span>
<span class="t" style="left:326px;top:244.5px;">Typ</span>
<div style="left:311px;top:257px;width:11px;height:135px;background:#e1e3e0;"></div>
<div style="left:322px;top:257px;width:50px;height:135px;background:#fefefe;"></div>
<div style="left:311px;top:267.7px;width:61px;height:1px;background:#e9ebe8;"></div>
<div style="left:311px;top:278.9px;width:61px;height:1px;background:#e9ebe8;"></div>
<div style="left:311px;top:290.1px;width:61px;height:1px;background:#e9ebe8;"></div>
<div style="left:311px;top:301.3px;width:61px;height:1px;background:#e9ebe8;"></div>
<div style="left:311px;top:312.5px;width:61px;height:1px;background:#e9ebe8;"></div>
<div style="left:311px;top:323.7px;width:61px;height:1px;background:#e9ebe8;"></div>
<div style="left:311px;top:334.9px;width:61px;height:1px;background:#e9ebe8;"></div>
<div style="left:311px;top:346.1px;width:61px;height:1px;background:#e9ebe8;"></div>
<div style="left:311px;top:357.3px;width:61px;height:1px;background:#e9ebe8;"></div>
<div style="left:311px;top:368.5px;width:61px;height:1px;background:#e9ebe8;"></div>
<div style="left:311px;top:379.7px;width:61px;height:1px;background:#e9ebe8;"></div>
<div style="left:311px;top:390.9px;width:61px;height:1px;background:#e9ebe8;"></div>
<span class="t" style="left:314px;top:258px;">1</span>
<div style="left:321px;top:392px;width:13px;height:12.5px;background:#eef0ed;border:1px solid #dfe1de;"></div>
<svg style="position:absolute;left:324.5px;top:395.5px;" width="5" height="6" viewBox="0 0 5 6"><path d="M4 0.500v5l-3.500-2.500z" fill="#5a5c59"/></svg>
<div style="left:1140px;top:233px;width:19px;height:9.5px;background:#fefefe;border:1px solid #dcdedb;"></div>
<svg style="position:absolute;left:1152px;top:236px;" width="6" height="4" viewBox="0 0 6 4"><path d="M0.500 0.500h5l-2.500 3z" fill="#3c3e3b"/></svg>
<span class="t" style="left:1141px;top:232px;font-size:6px;">..</span>
<div style="left:1139.5px;top:257px;width:3.5px;height:134px;background:#eef0ed;border:1px solid #dfe1de;"></div>
<div style="left:1145.5px;top:288.5px;width:13px;height:13.5px;background:#f5f6f4;border-right:1.500px solid #8d8f8c;border-bottom:1.500px solid #8d8f8c;border-left:1px solid #eceeeb;border-top:1px solid #eceeeb;"></div>
<svg style="position:absolute;left:1148px;top:291.0px;" width="8" height="8" viewBox="0 0 8 8"><path d="M1 4.500l3-3.500 3 3.500h-2v2.500h-2v-2.500z" fill="#595b58"/></svg>
<div style="left:1145.5px;top:305.5px;width:13px;height:13.5px;background:#f5f6f4;border-right:1.500px solid #8d8f8c;border-bottom:1.500px solid #8d8f8c;border-left:1px solid #eceeeb;border-top:1px solid #eceeeb;"></div>
<svg style="position:absolute;left:1148px;top:308.0px;" width="8" height="8" viewBox="0 0 8 8"><path d="M1 3.500l3 3.500 3-3.500h-2v-2.500h-2v2.500z" fill="#595b58"/></svg>
<span class="t" style="left:303px;top:455.5px;">Einkäufer</span>
<span class="t" style="left:303px;top:467px;">Eigentüm</span>
<div style="left:304px;top:521px;width:8px;height:8px;background:#f1f3f0;border:1px solid #d9dbd8;"></div>
<span class="t" style="left:316px;top:519.5px;color:#c6c8c5;">Zahlungsauftragslauf</span>
<span class="t" style="left:303px;top:532.5px;">Bemerkungen</span>
<div style="left:302px;top:575px;width:70px;height:1px;background:#e9ebe8;"></div>
<div style="left:1139.5px;top:460.5px;width:23.5px;height:9px;background:#e1e3e0;"></div>
<span class="t" style="right:118.0px;top:459.0px;font-size:7.400px;">62.72</span>
<div style="left:1139.5px;top:471px;width:23.5px;height:9.5px;background:#e1e3e0;"></div>
<div style="left:1139.5px;top:481.5px;width:23.5px;height:9.5px;background:#e1e3e0;"></div>
<div style="left:1139.5px;top:492px;width:23.5px;height:9.5px;background:#e1e3e0;"></div>
<div style="left:1139.5px;top:502.5px;width:23.5px;height:9.5px;background:#e1e3e0;"></div>
<div style="left:1076px;top:513px;width:86.5px;height:10px;background:#e1e3e0;"></div>
<span class="t" style="right:118.5px;top:512.0px;font-size:7.400px;">EUR 5.08</span>
<div style="left:1076px;top:524.3px;width:86.5px;height:9.5px;background:#e1e3e0;"></div>
<span class="t" style="right:118.5px;top:523.05px;font-size:7.400px;">EUR 67.80</span>
<div style="left:1076px;top:534.5px;width:86.5px;height:9.5px;background:#e1e3e0;"></div>
<div style="left:1076px;top:545.5px;width:86.5px;height:10px;background:#e1e3e0;"></div>
<span class="t" style="right:118.5px;top:544.5px;font-size:7.400px;">EUR 67.80</span>
<svg style="position:absolute;left:1165px;top:523.5px;" width="11" height="12" viewBox="0 0 11 12"><rect x="0.500" y="4" width="4" height="7" fill="#4f8fc0"/><circle cx="4.500" cy="3.500" r="2.500" fill="#6aa3cf"/><rect x="4" y="5" width="6.500" height="6.500" fill="#f0b62c" stroke="#c58e17" stroke-width="0.700"/><path d="M5.500 5l2-2 2 2" fill="none" stroke="#c58e17"/></svg>
<div class="btn" style="left:302px;top:592px;width:62.5px;height:13.5px;"><span style="left:0;top:0;width:5px;height:100%;background:linear-gradient(90deg,#f0a818,#f8cf52);"></span><span class="t" style="left:0;width:100%;top:0px;font-size:7.800px;">OK</span></div>
<div class="btnd" style="left:368.5px;top:592px;width:75px;height:13.5px;"><span class="t" style="left:0;width:100%;top:0px;font-size:7.600px;">Geparkten Beleg hi...</span></div>
<div class="btn" style="left:447px;top:592px;width:48px;height:13.5px;"><span class="t" style="left:0;width:100%;top:0px;font-size:7.600px;">Abbrechen</span></div>
<div class="btnd" style="left:1011px;top:592px;width:74.5px;height:13.5px;"><span class="t" style="left:0;width:100%;top:0px;font-size:7.600px;">Kopieren von</span></div>
<div class="btn" style="left:1088px;top:592px;width:75px;height:13.5px;"><span class="t" style="left:0;width:66px;top:0px;font-size:7.600px;">Kopieren nach</span></div>
<svg style="position:absolute;left:1156px;top:600px;" width="4" height="4" viewBox="0 0 4 4"><path d="M3.500 0.500v3h-3z" fill="#3c3306"/></svg>
<div class="win" style="left:336px;top:110px;width:803.5px;height:415.5px;border-color:#cdd0cc;box-shadow:0 0 2px rgba(0,0,0,0.08);"></div>
<span class="t" style="left:343.5px;top:113.5px;">Preislisten</span>
<div style="left:339px;top:125.5px;width:797px;height:2px;background:#a1a3a0;"></div>
<svg style="position:absolute;left:1095.5px;top:112.5px;" width="40" height="12" viewBox="0 0 40 12"><rect x="0.500" y="0.500" width="9.500" height="10.500" fill="#f4f6f3"/><rect x="13.500" y="0.500" width="9.500" height="10.500" fill="#f4f6f3"/><rect x="27" y="0.500" width="9.500" height="10.500" fill="#f4f6f3"/><path d="M2 8.500h5.500" stroke="#cfd1ce" stroke-width="1.100"/><rect x="14.800" y="2.800" width="6.400" height="6.400" fill="#eef0ed" stroke="#cfd1ce" stroke-width="0.900"/><path d="M29 3l5.200 6M34.200 3l-5.200 6" stroke="#cfd1ce" stroke-width="1"/></svg>
<svg style="position:absolute;left:346px;top:133.5px;" width="10" height="10" viewBox="0 0 10 10"><circle cx="5" cy="5" r="3.800" fill="#fdfdfd" stroke="#9a9c99" stroke-width="0.900"/><circle cx="5" cy="5" r="1.500" fill="#3f413e"/></svg>
<svg style="position:absolute;left:346px;top:146.5px;" width="10" height="10" viewBox="0 0 10 10"><circle cx="5" cy="5" r="3.800" fill="#fdfdfd" stroke="#9a9c99" stroke-width="0.900"/></svg>
<span class="t" style="left:359.5px;top:132.5px;"><u>G</u>esamte Preisliste aktualisieren</span>
<span class="t" style="left:359.5px;top:145.5px;">A<u>u</u>swahl aktualisieren</span>
<div style="left:345px;top:161.5px;width:770.5px;height:12.5px;background:#e2e4e1;"></div>
<span class="t" style="left:350px;top:161.5px;">#</span>
<span class="t" style="left:362.5px;top:161.5px;">Preislistenname</span>
<span class="t" style="left:459.5px;top:161.5px;">Mehrere Basispreislisten oder Faktoren</span>
<span class="t" style="left:609.5px;top:161.5px;">Standard-Basispreisliste</span>
<span class="t" style="left:698.5px;top:161.5px;">Standardfaktor</span>
<span class="t" style="left:768px;top:161.5px;">Rundungsmethode</span>
<span class="t" style="left:839.5px;top:161.5px;">Berechtigungsgruppe</span>
<span class="t" style="left:921px;top:161.5px;">Bruttopreis</span>
<span class="t" style="left:966px;top:161.5px;">Rundungsregel</span>
<span class="t" style="left:1049px;top:161.5px;">Ende/Intervall</span>
<div style="left:359.5px;top:161.5px;width:1px;height:25px;background:#eef0ed;"></div>
<div style="left:456.5px;top:161.5px;width:1px;height:25px;background:#eef0ed;"></div>
<div style="left:606.5px;top:161.5px;width:1px;height:25px;background:#eef0ed;"></div>
<div style="left:695.5px;top:161.5px;width:1px;height:25px;background:#eef0ed;"></div>
<div style="left:765px;top:161.5px;width:1px;height:25px;background:#eef0ed;"></div>
<div style="left:836.5px;top:161.5px;width:1px;height:25px;background:#eef0ed;"></div>
<div style="left:918px;top:161.5px;width:1px;height:25px;background:#eef0ed;"></div>
<div style="left:963px;top:161.5px;width:1px;height:25px;background:#eef0ed;"></div>
<div style="left:1046px;top:161.5px;width:1px;height:25px;background:#eef0ed;"></div>
<svg style="position:absolute;left:451px;top:163px;" width="5" height="8" viewBox="0 0 5 8"><circle cx="2.500" cy="2.500" r="1.800" fill="none" stroke="#8d8f8c" stroke-width="0.900"/><path d="M2.500 4.300v3M1.200 6h2.600" stroke="#8d8f8c" stroke-width="0.800"/></svg>
<svg style="position:absolute;left:1117.5px;top:161px;" width="8" height="8" viewBox="0 0 8 8"><path d="M1 7l5.500-5.500M2.500 1.200h4.300v4.300" fill="none" stroke="#8db9da" stroke-width="1.100"/></svg>
<div style="left:345px;top:174px;width:770.5px;height:325.5px;background:#e4e6e3;"></div>
<div style="left:345px;top:174px;width:770.5px;height:1px;background:#d8dad7;"></div>
<div style="left:345px;top:184.7px;width:770.5px;height:1px;background:#eaece9;"></div>
<div style="left:345px;top:195.89999999999998px;width:770.5px;height:1px;background:#eaece9;"></div>
<div style="left:345px;top:207.1px;width:770.5px;height:1px;background:#eaece9;"></div>
<div style="left:345px;top:218.29999999999998px;width:770.5px;height:1px;background:#eaece9;"></div>
<div style="left:345px;top:229.5px;width:770.5px;height:1px;background:#eaece9;"></div>
<div style="left:345px;top:240.7px;width:770.5px;height:1px;background:#eaece9;"></div>
<div style="left:345px;top:251.89999999999998px;width:770.5px;height:1px;background:#eaece9;"></div>
<div style="left:345px;top:263.09999999999997px;width:770.5px;height:1px;background:#eaece9;"></div>
<div style="left:345px;top:274.3px;width:770.5px;height:1px;background:#eaece9;"></div>
<div style="left:345px;top:285.5px;width:770.5px;height:1px;background:#eaece9;"></div>
<div style="left:345px;top:296.7px;width:770.5px;height:1px;background:#eaece9;"></div>
<div style="left:345px;top:307.9px;width:770.5px;height:1px;background:#eaece9;"></div>
<div style="left:345px;top:319.09999999999997px;width:770.5px;height:1px;background:#eaece9;"></div>
<div style="left:345px;top:330.3px;width:770.5px;height:1px;background:#eaece9;"></div>
<div style="left:345px;top:341.49999999999994px;width:770.5px;height:1px;background:#eaece9;"></div>
<div style="left:345px;top:352.7px;width:770.5px;height:1px;background:#eaece9;"></div>
<div style="left:345px;top:363.9px;width:770.5px;height:1px;background:#eaece9;"></div>
<div style="left:345px;top:375.09999999999997px;width:770.5px;height:1px;background:#eaece9;"></div>
<div style="left:345px;top:386.3px;width:770.5px;height:1px;background:#eaece9;"></div>
<div style="left:345px;top:397.49999999999994px;width:770.5px;height:1px;background:#eaece9;"></div>
<div style="left:345px;top:408.7px;width:770.5px;height:1px;background:#eaece9;"></div>
<div style="left:345px;top:419.9px;width:770.5px;height:1px;background:#eaece9;"></div>
<div style="left:345px;top:431.09999999999997px;width:770.5px;height:1px;background:#eaece9;"></div>
<div style="left:345px;top:442.29999999999995px;width:770.5px;height:1px;background:#eaece9;"></div>
<div style="left:345px;top:453.49999999999994px;width:770.5px;height:1px;background:#eaece9;"></div>
<div style="left:345px;top:464.7px;width:770.5px;height:1px;background:#eaece9;"></div>
<div style="left:345px;top:475.9px;width:770.5px;height:1px;background:#eaece9;"></div>
<div style="left:345px;top:487.09999999999997px;width:770.5px;height:1px;background:#eaece9;"></div>
<div style="left:345px;top:498.29999999999995px;width:770.5px;height:1px;background:#eaece9;"></div>
<span class="t" style="left:361px;top:175px;color:#aeb0ad;">Zuletzt ermittelter Preis</span>
<span class="t" style="left:361px;top:186.5px;color:#aeb0ad;">Letzter Einkaufspreis</span>
<div style="left:360px;top:197.5px;width:96px;height:301px;background:#fefefe;"></div>
<div style="left:360px;top:207.7px;width:96px;height:1px;background:#ecedea;"></div>
<div style="left:360px;top:218.89999999999998px;width:96px;height:1px;background:#ecedea;"></div>
<div style="left:360px;top:230.1px;width:96px;height:1px;background:#ecedea;"></div>
<div style="left:360px;top:241.29999999999998px;width:96px;height:1px;background:#ecedea;"></div>
<div style="left:360px;top:252.5px;width:96px;height:1px;background:#ecedea;"></div>
<div style="left:360px;top:263.7px;width:96px;height:1px;background:#ecedea;"></div>
<div style="left:360px;top:274.9px;width:96px;height:1px;background:#ecedea;"></div>
<div style="left:360px;top:286.09999999999997px;width:96px;height:1px;background:#ecedea;"></div>
<div style="left:360px;top:297.3px;width:96px;height:1px;background:#ecedea;"></div>
<div style="left:360px;top:308.5px;width:96px;height:1px;background:#ecedea;"></div>
<div style="left:360px;top:319.7px;width:96px;height:1px;background:#ecedea;"></div>
<div style="left:360px;top:330.9px;width:96px;height:1px;background:#ecedea;"></div>
<div style="left:360px;top:342.09999999999997px;width:96px;height:1px;background:#ecedea;"></div>
<div style="left:360px;top:353.3px;width:96px;height:1px;background:#ecedea;"></div>
<div style="left:360px;top:364.49999999999994px;width:96px;height:1px;background:#ecedea;"></div>
<div style="left:360px;top:375.7px;width:96px;height:1px;background:#ecedea;"></div>
<div style="left:360px;top:386.9px;width:96px;height:1px;background:#ecedea;"></div>
<div style="left:360px;top:398.09999999999997px;width:96px;height:1px;background:#ecedea;"></div>
<div style="left:360px;top:409.3px;width:96px;height:1px;background:#ecedea;"></div>
<div style="left:360px;top:420.49999999999994px;width:96px;height:1px;background:#ecedea;"></div>
<div style="left:360px;top:431.7px;width:96px;height:1px;background:#ecedea;"></div>
<div style="left:360px;top:442.9px;width:96px;height:1px;background:#ecedea;"></div>
<div style="left:360px;top:454.09999999999997px;width:96px;height:1px;background:#ecedea;"></div>
<div style="left:360px;top:465.29999999999995px;width:96px;height:1px;background:#ecedea;"></div>
<div style="left:360px;top:476.49999999999994px;width:96px;height:1px;background:#ecedea;"></div>
<div style="left:360px;top:487.7px;width:96px;height:1px;background:#ecedea;"></div>
<div style="left:360px;top:498.9px;width:96px;height:1px;background:#ecedea;"></div>
<span class="t" style="left:348px;top:197.7px;font-size:7.800px;">1</span>
<span class="t" style="left:361px;top:197.7px;font-size:7.800px;">Ver</span>
<div style="left:345px;top:209.39999999999998px;width:14px;height:11px;background:#b9bcb9;"></div>
<div style="left:360px;top:209.39999999999998px;width:96px;height:11px;background:#fbe08b;"></div>
<div style="left:457px;top:209.39999999999998px;width:658.5px;height:11px;background:#fbe08b;"></div>
<span class="t" style="left:348px;top:208.89999999999998px;font-size:7.800px;">2</span>
<span class="t" style="left:361px;top:208.89999999999998px;font-size:7.800px;">EK</span>
<span class="t" style="left:348px;top:220.1px;font-size:7.800px;">3</span>
<span class="t" style="left:361px;top:220.1px;font-size:7.800px;">EK</span>
<span class="t" style="left:348px;top:231.29999999999998px;font-size:7.800px;">4</span>
<span class="t" style="left:361px;top:231.29999999999998px;font-size:7.800px;">VK</span>
<span class="t" style="left:348px;top:242.5px;font-size:7.800px;">5</span>
<span class="t" style="left:361px;top:242.5px;font-size:7.800px;">VK</span>
<span class="t" style="left:348px;top:253.7px;font-size:7.800px;">6</span>
<span class="t" style="left:361px;top:253.7px;font-size:7.800px;">VK</span>
<div style="left:937px;top:176.5px;width:8px;height:8px;background:#fbfbfa;border:1px solid #d8dad7;"></div>
<div style="left:1116.5px;top:174.5px;width:12px;height:325px;background:#fafbf9;border:1px solid #eceeeb;"></div>
<div style="left:1116.5px;top:174.5px;width:12px;height:12px;background:#eef0ed;border:1px solid #e3e5e2;"></div>
<svg style="position:absolute;left:1119.5px;top:179px;" width="6" height="3" viewBox="0 0 6 3"><path d="M0.500 2h5" stroke="#c3c5c2" stroke-width="1"/></svg>
<div style="left:1116.5px;top:487.5px;width:12px;height:12px;background:#eef0ed;border:1px solid #e3e5e2;"></div>
<svg style="position:absolute;left:1119.5px;top:491.5px;" width="6" height="4" viewBox="0 0 6 4"><path d="M0.500 0.500h5l-2.500 3z" fill="#b5b7b4"/></svg>
<div class="btn" style="left:346px;top:504px;width:46px;height:13.5px;"><span style="left:0;top:0;width:5px;height:100%;background:linear-gradient(90deg,#f0a818,#f8cf52);"></span><span class="t" style="left:0;width:100%;top:0px;font-size:7.800px;">OK</span></div>
<div class="btn" style="left:1040px;top:504px;width:85.5px;height:13.5px;"><span class="t" style="right:19.500px;top:0px;font-size:7.500px;">Preisaktualisierungsassistent</span></div>
<div class="win" style="left:374px;top:185px;width:701.5px;height:398.5px;border-color:#cacdc9;background:#f8faf7;"></div>
<div style="left:374.5px;top:185.5px;width:700.5px;height:14.5px;background:linear-gradient(#c3c5c2,#a3a5a2 45%,#828481);"></div>
<div style="left:374.5px;top:199.5px;width:700.5px;height:4px;background:linear-gradient(#e0b43a,#efcb5c 45%,#fbedb8 85%,#fbfcf8);"></div>
<span class="t" style="left:381.5px;top:188.5px;color:#2c2d2b;font-size:7.600px;">Abfragegenerator</span>
<svg style="position:absolute;left:1032px;top:187px;" width="40" height="12" viewBox="0 0 40 12"><rect x="0.500" y="0.500" width="10.500" height="11" fill="#f4f5f3" stroke="#9a9c99" stroke-width="0.700"/><path d="M3 9h5.500" stroke="#5a5c59" stroke-width="1.200"/>
<rect x="14.300" y="0.500" width="10.500" height="11" fill="#f4f5f3" stroke="#9a9c99" stroke-width="0.700"/><rect x="16.500" y="2.800" width="6" height="6" fill="none" stroke="#5a5c59" stroke-width="0.900"/><path d="M16.500 3.300h6" stroke="#5a5c59" stroke-width="1.100"/>
<rect x="28" y="0.500" width="10.500" height="11" fill="#f4f5f3" stroke="#9a9c99" stroke-width="0.700"/><path d="M30.700 3.200l5 5.600M35.700 3.200l-5 5.600" stroke="#4a4c49" stroke-width="1.150"/></svg>
<div style="left:383.5px;top:209.5px;width:41px;height:9px;background:#fefefe;border:1px solid #e1e3e0;"></div>
<div style="left:383px;top:221.5px;width:24.5px;height:289.5px;background:#e3e5e2;"></div>
<div style="left:383px;top:221.5px;width:24.5px;height:10.65px;background:#fbe394;"></div>
<span class="t" style="left:385.5px;top:221px;color:#5a4a10;font-size:7.600px;">ITT1</span>
<div style="left:383px;top:232.15px;width:24.5px;height:1px;background:#eaece9;"></div>
<div style="left:383px;top:243.3px;width:24.5px;height:1px;background:#eaece9;"></div>
<div style="left:383px;top:254.45px;width:24.5px;height:1px;background:#eaece9;"></div>
<div style="left:383px;top:265.6px;width:24.5px;height:1px;background:#eaece9;"></div>
<div style="left:383px;top:276.75px;width:24.5px;height:1px;background:#eaece9;"></div>
<div style="left:383px;top:287.9px;width:24.5px;height:1px;background:#eaece9;"></div>
<div style="left:383px;top:299.05px;width:24.5px;height:1px;background:#eaece9;"></div>
<div style="left:383px;top:310.2px;width:24.5px;height:1px;background:#eaece9;"></div>
<div style="left:383px;top:321.35px;width:24.5px;height:1px;background:#eaece9;"></div>
<div style="left:383px;top:332.5px;width:24.5px;height:1px;background:#eaece9;"></div>
<div style="left:383px;top:343.65px;width:24.5px;height:1px;background:#eaece9;"></div>
<div style="left:383px;top:354.8px;width:24.5px;height:1px;background:#eaece9;"></div>
<div style="left:383px;top:365.95000000000005px;width:24.5px;height:1px;background:#eaece9;"></div>
<div style="left:383px;top:377.1px;width:24.5px;height:1px;background:#eaece9;"></div>
<div style="left:383px;top:388.25px;width:24.5px;height:1px;background:#eaece9;"></div>
<div style="left:383px;top:399.4px;width:24.5px;height:1px;background:#eaece9;"></div>
<div style="left:383px;top:410.55px;width:24.5px;height:1px;background:#eaece9;"></div>
<div style="left:383px;top:421.70000000000005px;width:24.5px;height:1px;background:#eaece9;"></div>
<div style="left:383px;top:432.85px;width:24.5px;height:1px;background:#eaece9;"></div>
<div style="left:383px;top:444.0px;width:24.5px;height:1px;background:#eaece9;"></div>
<div style="left:383px;top:455.15px;width:24.5px;height:1px;background:#eaece9;"></div>
<div style="left:383px;top:466.3px;width:24.5px;height:1px;background:#eaece9;"></div>
<div style="left:383px;top:477.45px;width:24.5px;height:1px;background:#eaece9;"></div>
<div style="left:383px;top:488.6px;width:24.5px;height:1px;background:#eaece9;"></div>
<div style="left:383px;top:499.75px;width:24.5px;height:1px;background:#eaece9;"></div>
<div style="left:408px;top:221.5px;width:11.5px;height:289.5px;background:#fcfdfb;border:1px solid #eceeeb;"></div>
<div style="left:408px;top:221.5px;width:11.5px;height:11px;background:#eceeeb;"></div>
<svg style="position:absolute;left:411px;top:225.5px;" width="6" height="3" viewBox="0 0 6 3"><path d="M0.500 2l2.500-1.500 2.500 1.500" stroke="#c9cbc8" fill="none"/></svg>
<div style="left:408px;top:500px;width:11.5px;height:11px;background:#eceeeb;"></div>
<svg style="position:absolute;left:411px;top:504px;" width="6" height="3" viewBox="0 0 6 3"><path d="M0.500 0.500l2.500 2 2.500-2" stroke="#b9bbb8" fill="none"/></svg>
<div style="left:383.5px;top:512.5px;width:12px;height:12px;background:#eef0ed;border:1px solid #e1e3e0;"></div>
<div style="left:395.5px;top:512.5px;width:12px;height:12px;background:#eef0ed;border:1px solid #e1e3e0;"></div>
<svg style="position:absolute;left:387px;top:515.5px;" width="5" height="6" viewBox="0 0 5 6"><path d="M4 0.500v5l-3.500-2.500z" fill="#6d6f6c"/></svg>
<svg style="position:absolute;left:399.5px;top:515.5px;" width="5" height="6" viewBox="0 0 5 6"><path d="M1 0.500v5l3.500-2.500z" fill="#6d6f6c"/></svg>
<div class="btn" style="left:383px;top:533px;width:17px;height:14px;"><span class="t" style="left:0;width:100%;top:0px;font-size:8px;font-weight:bold;"><u>X</u></span></div>
<div class="btn" style="left:403px;top:533px;width:32px;height:14px;"><span class="t" style="left:0;width:100%;top:0px;font-size:9px;font-weight:bold;letter-spacing:0.600px;color:#4a3f0a;">&gt;&gt;</span></div>
<div class="btn" style="left:383px;top:561px;width:48.5px;height:14px;"><span style="left:0;top:0;width:5px;height:100%;background:linear-gradient(90deg,#f0a818,#f8cf52);"></span><span class="t" style="left:0.500px;width:100%;top:0px;font-size:7.500px;">Ausführen</span></div>
<div class="btn" style="left:436px;top:561px;width:48px;height:14px;"><span class="t" style="left:0;width:100%;top:0px;font-size:7.400px;">Schließen</span></div>
<div class="btn" style="left:1017px;top:561px;width:48.5px;height:14px;"><span class="t" style="left:0;width:100%;top:0px;font-size:7.600px;"><u>O</u>peratoren</span></div>
<div style="left:446px;top:208.5px;width:184px;height:14px;background:#e6e8e5;"></div>
<span class="t" style="left:448.5px;top:208.5px;font-size:7.600px;color:#4a4c49;">Name</span>
<span class="t" style="left:514px;top:208.5px;font-size:7.600px;color:#4a4c49;">Beschreibung</span>
<div style="left:511.5px;top:208.5px;width:1px;height:14px;background:#f0f2ef;"></div>
<div style="left:446px;top:222.7px;width:184px;height:306.53000000000003px;background:#e4e6e3;"></div>
<div style="left:446px;top:232.57px;width:184px;height:1px;background:#eef0ed;"></div>
<span class="t qb" style="left:447.5px;top:222.0px;">Father</span>
<span class="t qb" style="left:513px;top:222.0px;">Übergeordneter Artikel</span>
<div style="left:446px;top:243.14px;width:184px;height:1px;background:#eef0ed;"></div>
<span class="t q" style="left:447.5px;top:232.57px;">ChildNum</span>
<span class="t q" style="left:513px;top:232.57px;">Komponentenelementnummer</span>
<div style="left:446px;top:253.70999999999998px;width:184px;height:1px;background:#eef0ed;"></div>
<span class="t q" style="left:447.5px;top:243.14px;">VisOrder</span>
<span class="t q" style="left:513px;top:243.14px;">Optische Zeilenfolge</span>
<div style="left:446px;top:264.28000000000003px;width:184px;height:1px;background:#eef0ed;"></div>
<span class="t q" style="left:447.5px;top:253.70999999999998px;">Code</span>
<span class="t q" style="left:513px;top:253.70999999999998px;">Komponentencode</span>
<div style="left:446px;top:274.85px;width:184px;height:1px;background:#eef0ed;"></div>
<span class="t q" style="left:447.5px;top:264.28px;">Quantity</span>
<span class="t q" style="left:513px;top:264.28px;">Menge</span>
<div style="left:446px;top:285.42px;width:184px;height:1px;background:#eef0ed;"></div>
<span class="t qb" style="left:447.5px;top:274.85px;">Warehouse</span>
<span class="t qb" style="left:513px;top:274.85px;">Lager</span>
<div style="left:446px;top:295.99px;width:184px;height:1px;background:#eef0ed;"></div>
<span class="t q" style="left:447.5px;top:285.42px;">Price</span>
<span class="t q" style="left:513px;top:285.42px;">Preis</span>
<div style="left:446px;top:306.56px;width:184px;height:1px;background:#eef0ed;"></div>
<span class="t qb" style="left:447.5px;top:295.99px;">Currency</span>
<span class="t qb" style="left:513px;top:295.99px;">Währung</span>
<div style="left:446px;top:307.26px;width:184px;height:10.57px;background:#f9e186;"></div>
<span class="t q" style="left:447.5px;top:306.56px;">PriceList</span>
<span class="t q" style="left:513px;top:306.56px;">Preisliste</span>
<div style="left:446px;top:327.7px;width:184px;height:1px;background:#eef0ed;"></div>
<span class="t q" style="left:447.5px;top:317.13px;">OrigPrice</span>
<span class="t q" style="left:513px;top:317.13px;">Neupreis</span>
<div style="left:446px;top:338.27px;width:184px;height:1px;background:#eef0ed;"></div>
<span class="t q" style="left:447.5px;top:327.7px;">OrigCurr</span>
<span class="t q" style="left:513px;top:327.7px;">Originalwährung</span>
<div style="left:446px;top:348.84000000000003px;width:184px;height:1px;background:#eef0ed;"></div>
<span class="t q" style="left:447.5px;top:338.27px;">IssueMthd</span>
<span class="t q" style="left:513px;top:338.27px;">Ausgabemethode</span>
<div style="left:446px;top:359.40999999999997px;width:184px;height:1px;background:#eef0ed;"></div>
<span class="t q" style="left:447.5px;top:348.84000000000003px;">Uom</span>
<span class="t q" style="left:513px;top:348.84000000000003px;">Bestandsmengeneinheit</span>
<div style="left:446px;top:369.98px;width:184px;height:1px;background:#eef0ed;"></div>
<span class="t q" style="left:447.5px;top:359.40999999999997px;">Comment</span>
<span class="t q" style="left:513px;top:359.40999999999997px;">Bemerkung</span>
<div style="left:446px;top:380.55px;width:184px;height:1px;background:#eef0ed;"></div>
<span class="t q" style="left:447.5px;top:369.98px;">LogInstanc</span>
<span class="t q" style="left:513px;top:369.98px;">Protokollinstanz</span>
<div style="left:446px;top:391.12px;width:184px;height:1px;background:#eef0ed;"></div>
<span class="t q" style="left:447.5px;top:380.55px;">Object</span>
<span class="t q" style="left:513px;top:380.55px;">Objekt</span>
<div style="left:446px;top:401.69px;width:184px;height:1px;background:#eef0ed;"></div>
<span class="t qb" style="left:447.5px;top:391.12px;">OcrCode</span>
<span class="t qb" style="left:513px;top:391.12px;">Aufteilungsregel</span>
<div style="left:446px;top:412.26px;width:184px;height:1px;background:#eef0ed;"></div>
<span class="t qb" style="left:447.5px;top:401.69px;">OcrCode2</span>
<span class="t qb" style="left:513px;top:401.69px;">Aufteilungsregel 2</span>
<div style="left:446px;top:422.83px;width:184px;height:1px;background:#eef0ed;"></div>
<span class="t qb" style="left:447.5px;top:412.26px;">OcrCode3</span>
<span class="t qb" style="left:513px;top:412.26px;">Aufteilungsregel 3</span>
<div style="left:446px;top:433.4px;width:184px;height:1px;background:#eef0ed;"></div>
<span class="t qb" style="left:447.5px;top:422.83000000000004px;">OcrCode4</span>
<span class="t qb" style="left:513px;top:422.83000000000004px;">Aufteilungsregel 4</span>
<div style="left:446px;top:443.97px;width:184px;height:1px;background:#eef0ed;"></div>
<span class="t qb" style="left:447.5px;top:433.4px;">OcrCode5</span>
<span class="t qb" style="left:513px;top:433.4px;">Aufteilungsregel 5</span>
<div style="left:446px;top:454.53999999999996px;width:184px;height:1px;background:#eef0ed;"></div>
<span class="t q" style="left:447.5px;top:443.97px;">PmcpInput</span>
<span class="t q" style="left:513px;top:443.97px;">Hauptbestandteil</span>
<div style="left:446px;top:465.11px;width:184px;height:1px;background:#eef0ed;"></div>
<span class="t qb" style="left:447.5px;top:454.54px;">Project</span>
<span class="t qb" style="left:513px;top:454.54px;">Projektcode</span>
<div style="left:446px;top:475.68px;width:184px;height:1px;background:#eef0ed;"></div>
<span class="t q" style="left:447.5px;top:465.11px;">Type</span>
<span class="t q" style="left:513px;top:465.11px;">Komponentenart</span>
<div style="left:446px;top:486.25px;width:184px;height:1px;background:#eef0ed;"></div>
<span class="t qb" style="left:447.5px;top:475.68px;">WipActCode</span>
<span class="t qb" style="left:513px;top:475.68px;">WIA Kontocode</span>
<div style="left:446px;top:496.82px;width:184px;height:1px;background:#eef0ed;"></div>
<span class="t q" style="left:447.5px;top:486.25px;">AddQuantit</span>
<span class="t q" style="left:513px;top:486.25px;">Zusätzliche Menge</span>
<div style="left:446px;top:507.39px;width:184px;height:1px;background:#eef0ed;"></div>
<span class="t q" style="left:447.5px;top:496.82px;">LineText</span>
<span class="t q" style="left:513px;top:496.82px;">Zeilentext</span>
<div style="left:446px;top:517.9599999999999px;width:184px;height:1px;background:#eef0ed;"></div>
<span class="t q" style="left:447.5px;top:507.39px;">StageId</span>
<span class="t q" style="left:513px;top:507.39px;">Stufen-ID</span>
<div style="left:446px;top:528.5300000000001px;width:184px;height:1px;background:#eef0ed;"></div>
<span class="t q" style="left:447.5px;top:517.96px;">ItemName</span>
<span class="t q" style="left:513px;top:517.96px;">Artikelbeschreibung</span>
<div style="left:511.5px;top:222.7px;width:1px;height:306.53000000000003px;background:#eceeeb;opacity:0.700;"></div>
<svg style="position:absolute;left:630.5px;top:208px;" width="8" height="8" viewBox="0 0 8 8"><path d="M1 7l5.500-5.500M2.500 1.200h4.300v4.300" fill="none" stroke="#9cc1dd" stroke-width="1.100"/></svg>
<div style="left:630.5px;top:222.5px;width:12px;height:305px;background:#fafbf9;border:1px solid #eceeeb;"></div>
<div style="left:630.5px;top:222.5px;width:12px;height:11.5px;background:#e9ebe8;"></div>
<svg style="position:absolute;left:633.5px;top:227px;" width="6" height="3" viewBox="0 0 6 3"><path d="M0.500 1.500h5" stroke="#c3c5c2" stroke-width="1"/></svg>
<div style="left:630.5px;top:516px;width:12px;height:11.5px;background:#e9ebe8;"></div>
<svg style="position:absolute;left:633.5px;top:520.5px;" width="6" height="3" viewBox="0 0 6 3"><path d="M0.500 1.500h5" stroke="#c3c5c2" stroke-width="1"/></svg>
<div style="left:446px;top:528.5px;width:184px;height:12.5px;background:#eef0ed;"></div>
<div style="left:458px;top:529.5px;width:160px;height:10.5px;background:#e6e8e5;border:1px solid #dcdedb;"></div>
<svg style="position:absolute;left:449px;top:532px;" width="5" height="6" viewBox="0 0 5 6"><path d="M4 0.500v5l-3.500-2.500z" fill="#5a5c59"/></svg>
<svg style="position:absolute;left:621.5px;top:532px;" width="5" height="6" viewBox="0 0 5 6"><path d="M1 0.500v5l3.500-2.500z" fill="#5a5c59"/></svg>
<span class="t" style="left:655px;top:204px;font-size:7.600px;">Auswählen</span>
<div style="left:654px;top:215px;width:411.5px;height:57px;background:#fefefe;border:1px solid #dfe1de;"></div>
<span class="t" style="left:655px;top:271px;font-size:7.600px;">Von</span>
<div style="left:654px;top:282px;width:411.5px;height:57px;background:#fefefe;border:1px solid #dfe1de;"></div>
<span class="t" style="left:656.5px;top:281px;font-size:7.800px;letter-spacing:0.150px;">ITT1 T0</span>
<span class="t" style="left:655px;top:338px;font-size:7.600px;">Wo</span>
<div style="left:654px;top:349px;width:411.5px;height:57px;background:#faf19c;border:1px solid #e8df8e;"></div>
<span class="t" style="left:659.5px;top:348.5px;font-size:7.400px;">T0.[PriceList]</span>
<div style="left:706.5px;top:350.5px;width:1px;height:8px;background:#5a5c59;"></div>
<span class="t" style="left:655px;top:405px;font-size:7.600px;">Sortieren nach</span>
<div style="left:654px;top:416px;width:411.5px;height:57px;background:#fefefe;border:1px solid #dfe1de;"></div>
<span class="t" style="left:655px;top:472px;font-size:7.600px;">Gruppieren nach</span>
<div style="left:654px;top:483px;width:411.5px;height:57px;background:#fefefe;border:1px solid #dfe1de;"></div>
<svg style="position:absolute;left:573px;top:308px;" width="9" height="14" viewBox="0 0 9 14"><path d="M1 1v10.500l2.600-2.300 1.900 4 1.500-0.700-1.900-3.800h3.400z" fill="#fff" stroke="#222" stroke-width="0.900"/></svg>
<div style="left:44px;top:690px;width:1192px;height:30px;background:#f3f5f2;border-top:1.500px solid #dcdedb;"></div>
<div style="left:44px;top:718px;width:1192px;height:2px;background:#d3d5d2;"></div>
<div style="left:47px;top:694.5px;width:518.5px;height:9.0px;background:#e5e7e4;border:1px solid #d9dbd8;border-radius:1px;"></div>
<div style="left:47px;top:707.5px;width:518.5px;height:9.0px;background:#e5e7e4;border:1px solid #d9dbd8;border-radius:1px;"></div>
<div style="left:629.5px;top:694.5px;width:259.0px;height:9.0px;background:#e5e7e4;border:1px solid #d9dbd8;border-radius:1px;"></div>
<div style="left:629.5px;top:707.5px;width:259.0px;height:9.0px;background:#e5e7e4;border:1px solid #d9dbd8;border-radius:1px;"></div>
<div style="left:891.5px;top:694.5px;width:257.0px;height:9.0px;background:#e5e7e4;border:1px solid #d9dbd8;border-radius:1px;"></div>
<div style="left:891.5px;top:707.5px;width:257.0px;height:9.0px;background:#e5e7e4;border:1px solid #d9dbd8;border-radius:1px;"></div>
<div style="left:566.5px;top:692px;width:62px;height:26px;background:#fbfcfa;"></div>
<span class="t" style="left:566.500px;width:62px;text-align:center;top:693.600px;font-size:7.800px;color:#4a4c49;">04.09.2025</span>
<span class="t" style="left:566.500px;width:62px;text-align:center;top:706.500px;font-size:7.800px;color:#4a4c49;">08:47</span>
<span class="t" style="left:1163.500px;top:695.500px;height:18px;line-height:18px;font-size:16.500px;font-weight:bold;color:#8b8d8a;letter-spacing:-1.100px;">SAP</span>
<span class="t" style="left:1195px;top:693.500px;font-size:5px;font-weight:bold;color:#b9bbb8;letter-spacing:0.200px;">Business</span>
<span class="t" style="left:1194.500px;top:701.500px;font-size:9.500px;font-weight:bold;color:#f0b323;">One</span>
<svg style="position:absolute;left:1224px;top:711px;" width="8" height="8" viewBox="0 0 8 8"><path d="M7.500 1l-6.500 6.500M7.500 4l-3.500 3.500" stroke="#b3b5b2" stroke-width="1"/></svg>
</body></html>
